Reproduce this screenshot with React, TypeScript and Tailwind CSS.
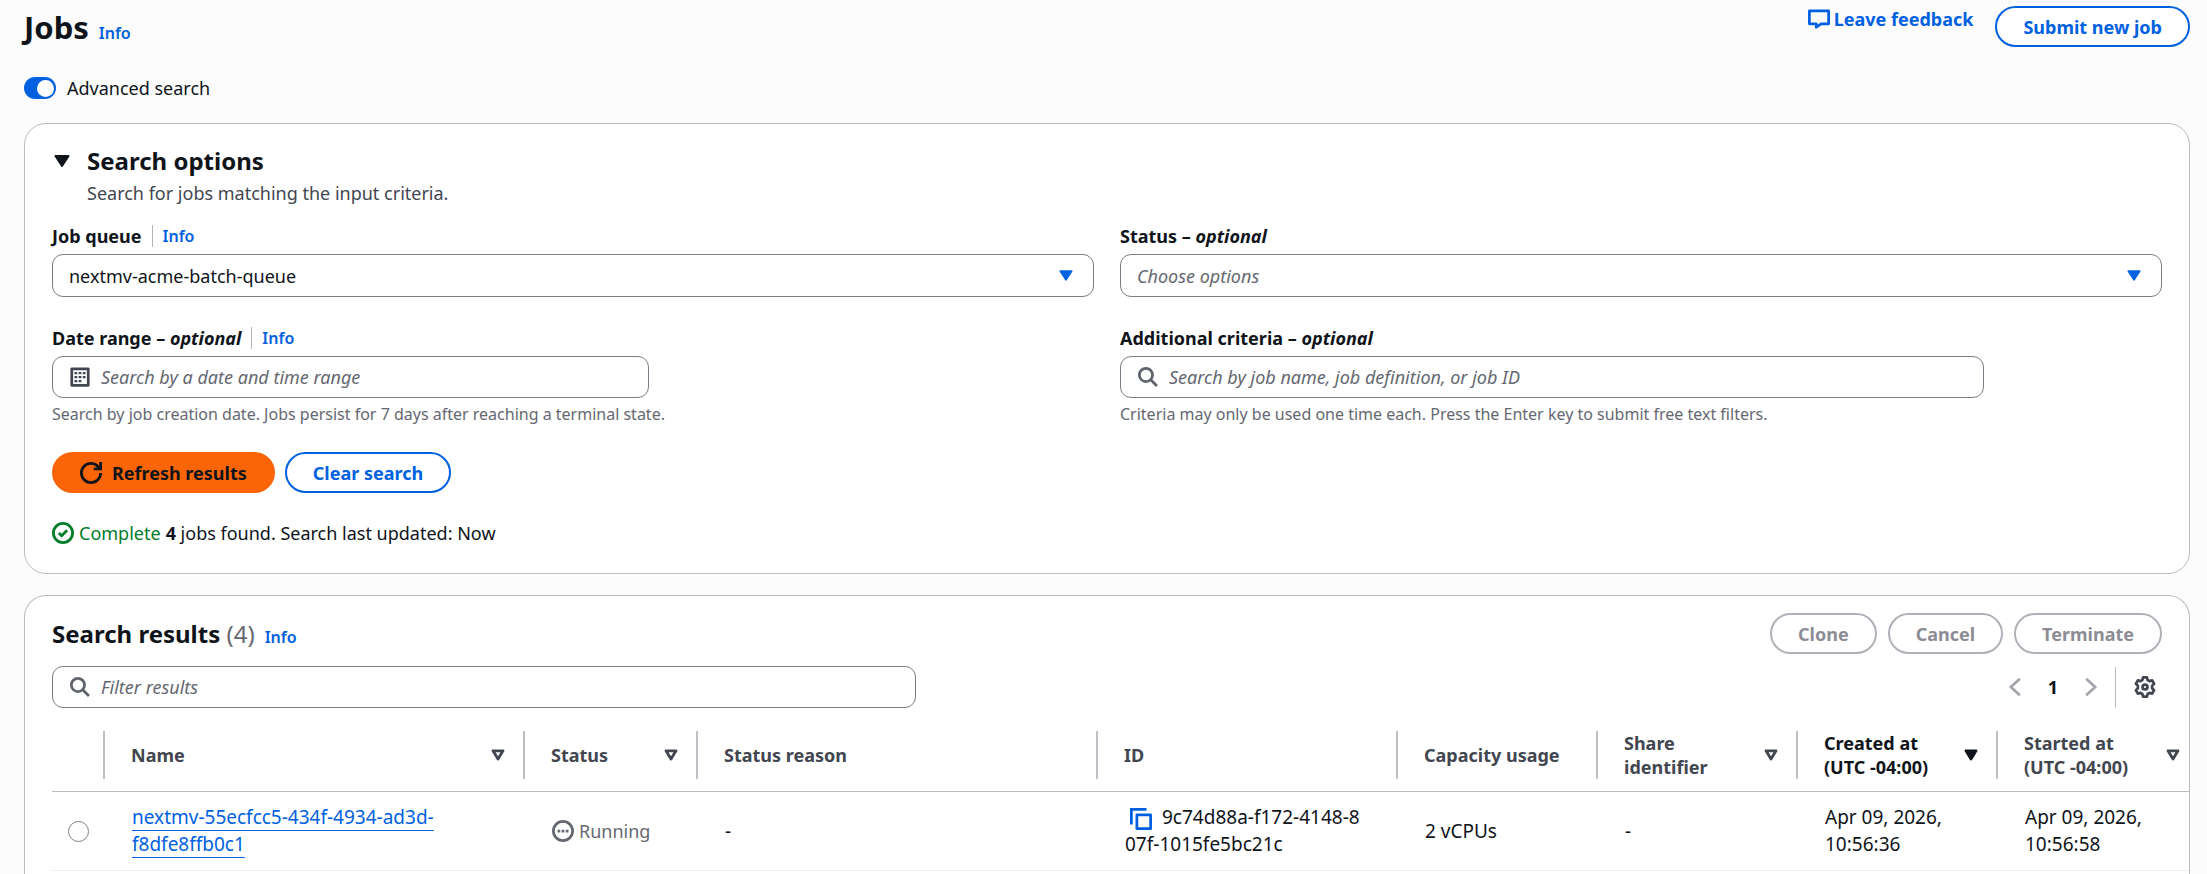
import { useState } from 'react';
import type { ReactNode } from 'react';
import clsx from 'clsx';

type Job = {
  name: string;
  status: string;
  statusReason: string;
  id: string;
  capacity: string;
  share: string;
  createdAt: string;
  startedAt: string;
};

type Column = {
  label: string;
  width: string;
  sort?: 'none' | 'desc';
};

const columns: Column[] = [
  { label: 'Name', width: 'w-[420px]', sort: 'none' },
  { label: 'Status', width: 'w-[173px]', sort: 'none' },
  { label: 'Status reason', width: 'w-[400px]' },
  { label: 'ID', width: 'w-[300px]' },
  { label: 'Capacity usage', width: 'w-[200px]' },
  { label: 'Share identifier', width: 'w-[200px]', sort: 'none' },
  { label: 'Created at (UTC -04:00)', width: 'w-[200px]', sort: 'desc' },
  { label: 'Started at (UTC -04:00)', width: 'w-[200px]', sort: 'none' },
];

const jobs: Job[] = [
  {
    name: 'nextmv-55ecfcc5-434f-4934-ad3d-f8dfe8ffb0c1',
    status: 'Running',
    statusReason: '-',
    id: '9c74d88a-f172-4148-807f-1015fe5bc21c',
    capacity: '2 vCPUs',
    share: '-',
    createdAt: 'Apr 09, 2026, 10:56:36',
    startedAt: 'Apr 09, 2026, 10:56:58',
  },
];

function SearchIcon() {
  return (
    <svg className="h-[22px] w-[22px] shrink-0" viewBox="0 0 16 16" fill="none" stroke="currentColor" strokeWidth="2">
      <circle cx="6.5" cy="6.5" r="4.800" />
      <path d="m10 10 4.500 4.500" />
    </svg>
  );
}

function CalendarIcon() {
  return (
    <svg className="h-[22px] w-[22px] shrink-0 text-[#424650]" viewBox="0 0 16 16">
      <path d="M2 2h12v12H2z" fill="none" stroke="currentColor" strokeWidth="2" strokeLinejoin="round" />
      <path
        d="M4 4.300h2v1.700H4zM7 4.300h2v1.700H7zM10 4.300h2v1.700h-2zM4 7.200h2v1.700H4zM7 7.200h2v1.700H7zM10 7.200h2v1.700h-2zM4 10.100h2v1.700H4zM7 10.100h2v1.700H7z"
        fill="currentColor"
      />
    </svg>
  );
}

function RefreshIcon() {
  return (
    <svg className="h-[22px] w-[22px] shrink-0" viewBox="0 0 16 16" fill="none" stroke="currentColor" strokeWidth="2">
      <path d="M15 8c0 3.900-3.100 7-7 7s-7-3.100-7-7 3.100-7 7-7c2.800 0 5 1.600 6.300 4" />
      <path d="M10 5h5V0" />
    </svg>
  );
}

function CaretIcon({ className }: { className?: string }) {
  return (
    <svg className={className} viewBox="0 0 16 12">
      <path d="M1.500 1h13L8 11z" fill="currentColor" stroke="currentColor" strokeWidth="2" strokeLinejoin="round" />
    </svg>
  );
}

function SortIcon({ filled }: { filled: boolean }) {
  return (
    <svg className="h-3 w-[14px] shrink-0" viewBox="0 0 14 12">
      <path
        d="M2 1.800h10L7 10z"
        fill={filled ? 'currentColor' : 'none'}
        stroke="currentColor"
        strokeWidth="2.800"
        strokeLinejoin="round"
      />
    </svg>
  );
}

function InfoLink() {
  return (
    <a href="#info" className="text-base leading-6 font-semibold text-[#0061e0]">
      Info
    </a>
  );
}

function Optional() {
  return (
    <>
      {' '}
      – <i>optional</i>
    </>
  );
}

function Field({
  id,
  label,
  info,
  hint,
  children,
}: {
  id: string;
  label: ReactNode;
  info?: boolean;
  hint?: string;
  children: ReactNode;
}) {
  return (
    <div>
      <div className="mb-1 flex h-7 items-center">
        <label htmlFor={id} className="font-bold">
          {label}
        </label>
        {info && (
          <span className="ml-[10px] flex h-[22px] items-center border-l border-[#b4b4bb] pl-[10px]">
            <InfoLink />
          </span>
        )}
      </div>
      {children}
      {hint && <p className="mt-1 text-base leading-6 text-[#656871]">{hint}</p>}
    </div>
  );
}

function SelectBox({ id, value }: { id: string; value?: string }) {
  return (
    <div className="relative">
      <select
        id={id}
        className={clsx(
          'h-[43px] w-full appearance-none rounded-[11px] border border-[#7d7d87] bg-white px-4',
          !value && 'text-[#656871] italic'
        )}
      >
        <option>{value ?? 'Choose options'}</option>
      </select>
      <CaretIcon className="pointer-events-none absolute top-4 right-[21px] h-[11px] w-[14px] text-[#0061e0]" />
    </div>
  );
}

function TextBox({
  id,
  placeholder,
  icon,
  className,
}: {
  id: string;
  placeholder: string;
  icon: ReactNode;
  className: string;
}) {
  return (
    <div
      className={clsx(
        'flex h-[42px] items-center gap-[10px] rounded-[11px] border border-[#7d7d87] bg-white px-4 text-[#5f636c]',
        className
      )}
    >
      {icon}
      <input
        id={id}
        type="text"
        aria-label={placeholder}
        placeholder={placeholder}
        className="min-w-0 flex-1 outline-none placeholder:text-[#656871] placeholder:italic"
      />
    </div>
  );
}

function Button({
  children,
  variant = 'normal',
}: {
  children: ReactNode;
  variant?: 'normal' | 'primary' | 'disabled';
}) {
  return (
    <button
      type="button"
      disabled={variant === 'disabled'}
      className={clsx(
        'flex h-[41px] items-center gap-[10px] rounded-full border-2 px-[26px] leading-6 font-bold whitespace-nowrap',
        variant === 'normal' && 'border-[#0061e0] bg-white text-[#0061e0]',
        variant === 'primary' && 'border-[#fb6507] bg-[#fb6507] text-[#0f141a]',
        variant === 'disabled' && 'border-[#b0b0b8] bg-white text-[#8c8c94]'
      )}
    >
      {children}
    </button>
  );
}

function PageHeader() {
  return (
    <header className="flex items-start justify-between pt-[6px]">
      <div className="flex items-baseline gap-[10px]">
        <h1 className="text-[31px] leading-[42px] font-bold">Jobs</h1>
        <InfoLink />
      </div>
      <div className="flex items-start gap-[22px]">
        <a href="#feedback" className="flex h-[26px] items-center gap-1 font-bold text-[#0061e0]">
          <svg className="h-[22px] w-[22px]" viewBox="0 0 16 16" fill="none" stroke="currentColor" strokeWidth="2">
            <path d="M1 2h14v9.500H9.500L6 14v-2.500H1z" strokeLinejoin="round" />
          </svg>
          Leave feedback
        </a>
        <Button>Submit new job</Button>
      </div>
    </header>
  );
}

function SearchOptions() {
  return (
    <section className="rounded-[22px] border border-[#b9bcc2] bg-white px-[27px] pt-[21px] pb-[26px]">
      <div className="flex gap-[17px]">
        <button type="button" aria-label="Collapse search options" className="flex h-8 items-center pl-[2px]">
          <CaretIcon className="h-3 w-4" />
        </button>
        <div>
          <h2 className="text-2xl leading-8 font-bold">Search options</h2>
          <p className="leading-8 text-[#424650]">Search for jobs matching the input criteria.</p>
        </div>
      </div>

      <div className="mt-[13px] grid grid-cols-2 gap-x-[26px] gap-y-[27px]">
        <Field id="job-queue" label="Job queue" info>
          <SelectBox id="job-queue" value="nextmv-acme-batch-queue" />
        </Field>
        <Field id="status" label={<>Status<Optional /></>}>
          <SelectBox id="status" />
        </Field>
        <Field
          id="date-range"
          label={<>Date range<Optional /></>}
          info
          hint="Search by job creation date. Jobs persist for 7 days after reaching a terminal state."
        >
          <TextBox
            id="date-range"
            placeholder="Search by a date and time range"
            icon={<CalendarIcon />}
            className="max-w-[597px]"
          />
        </Field>
        <Field
          id="criteria"
          label={<>Additional criteria<Optional /></>}
          hint="Criteria may only be used one time each. Press the Enter key to submit free text filters."
        >
          <TextBox
            id="criteria"
            placeholder="Search by job name, job definition, or job ID"
            icon={<SearchIcon />}
            className="max-w-[864px]"
          />
        </Field>
      </div>

      <div className="mt-[26px] flex gap-[10px]">
        <Button variant="primary">
          <RefreshIcon />
          Refresh results
        </Button>
        <Button>Clear search</Button>
      </div>

      <p className="mt-[26px] flex items-center gap-[5px] leading-7">
        <span className="flex items-center gap-[5px] text-[#007d2b]">
          <svg className="h-[22px] w-[22px]" viewBox="0 0 16 16" fill="none" stroke="currentColor" strokeWidth="2">
            <circle cx="8" cy="8" r="7" />
            <path d="m5 8 2 2 4-4" />
          </svg>
          Complete
        </span>
        <span>
          <b>4</b> jobs found. Search last updated: Now
        </span>
      </p>
    </section>
  );
}

function ResultsTable() {
  const cell = 'px-[27px]';
  return (
    <table className="w-[2146px] table-fixed text-left">
      <colgroup>
        <col className="w-[53px]" />
        {columns.map(c => (
          <col key={c.label} className={c.width} />
        ))}
      </colgroup>
      <thead>
        <tr className="border-b border-[#b9bcc2]">
          <th className="py-3">
            <div className="h-12 border-r-2 border-[#bfbfc6]" />
          </th>
          {columns.map((c, i) => (
            <th key={c.label} scope="col" className="py-3 font-bold">
              <div
                className={clsx(
                  'flex h-12 items-center justify-between pr-[18px] pl-[26px] leading-6',
                  i < columns.length - 1 && 'border-r-2 border-[#bfbfc6]',
                  c.sort === 'desc' ? 'text-[#0f141a]' : 'text-[#424650]'
                )}
              >
                <span className={clsx(c.sort && i > 4 && 'w-[120px]')}>{c.label}</span>
                {c.sort && <SortIcon filled={c.sort === 'desc'} />}
              </div>
            </th>
          ))}
        </tr>
      </thead>
      <tbody>
        {jobs.map(job => (
          <tr key={job.id} className="h-[79px] border-b border-[#ebebf0] text-[19px] leading-[27px]">
            <td>
              <input
                type="radio"
                name="job"
                aria-label={job.name}
                className="mx-auto block h-[21px] w-[21px] appearance-none rounded-full border border-[#7d7d87] bg-white checked:border-[6px] checked:border-[#0061e0]"
              />
            </td>
            <td className={cell}>
              <a
                href="#job"
                className="block w-[340px] text-[#0061e0] underline decoration-1 underline-offset-[6px]"
              >
                {job.name}
              </a>
            </td>
            <td className={cell}>
              <span className="flex items-center gap-[5px] text-lg text-[#656871]">
                <svg className="h-[22px] w-[22px]" viewBox="0 0 16 16" fill="none" stroke="currentColor">
                  <circle cx="8" cy="8" r="7" strokeWidth="2" />
                  <path d="M4 8h2M7 8h2M10 8h2" strokeWidth="2" />
                </svg>
                {job.status}
              </span>
            </td>
            <td className={cell}>{job.statusReason}</td>
            <td className="pr-8 pl-[27px] break-all">
              <button type="button" aria-label="Copy job ID" className="mr-[10px] ml-[5px] align-text-bottom text-[#0061e0]">
                <svg className="h-[22px] w-[22px]" viewBox="0 0 16 16" fill="none" stroke="currentColor" strokeWidth="2">
                  <path d="M5 5h10v10H5z" strokeLinejoin="round" />
                  <path d="M1 12V1h11" />
                </svg>
              </button>
              {job.id}
            </td>
            <td className={cell}>{job.capacity}</td>
            <td className={cell}>{job.share}</td>
            <td className={cell}>{job.createdAt}</td>
            <td className={cell}>{job.startedAt}</td>
          </tr>
        ))}
      </tbody>
    </table>
  );
}

function SearchResults() {
  return (
    <section className="mt-[21px] flex-1 overflow-hidden rounded-t-[22px] border border-b-0 border-[#b9bcc2] bg-white pt-[17px] pl-[27px]">
      <div className="flex items-center justify-between pr-[27px]">
        <div className="flex items-baseline gap-[10px]">
          <h2 className="text-2xl leading-8 font-bold">
            Search results <span className="font-normal text-[#656871]">(4)</span>
          </h2>
          <InfoLink />
        </div>
        <div className="flex gap-[11px]">
          <Button variant="disabled">Clone</Button>
          <Button variant="disabled">Cancel</Button>
          <Button variant="disabled">Terminate</Button>
        </div>
      </div>

      <div className="mt-3 flex items-center justify-between pr-[27px]">
        <TextBox id="filter" placeholder="Filter results" icon={<SearchIcon />} className="w-[864px]" />
        <div className="flex h-[42px] items-center">
          <button type="button" disabled aria-label="Previous page" className="text-[#a4a4ad]">
            <svg className="h-[22px] w-[22px]" viewBox="0 0 16 16" fill="none" stroke="currentColor" strokeWidth="2">
              <path d="M11.500 2 5 8l6.500 6" />
            </svg>
          </button>
          <button type="button" className="w-[54px] font-bold">
            1
          </button>
          <button type="button" disabled aria-label="Next page" className="text-[#a4a4ad]">
            <svg className="h-[22px] w-[22px]" viewBox="0 0 16 16" fill="none" stroke="currentColor" strokeWidth="2">
              <path d="m4.500 2 6.500 6-6.500 6" />
            </svg>
          </button>
          <div className="ml-[13px] flex h-[41px] items-center border-l border-[#b9bcc2] pr-[6px] pl-[18px]">
            <button type="button" aria-label="Preferences" className="text-[#424650]">
              <svg
                className="h-[22px] w-[22px]"
                viewBox="0 0 16 16"
                fill="none"
                stroke="currentColor"
                strokeWidth="2"
                strokeLinejoin="round"
              >
                <path d="M6.600 1h2.800l.5 1.900 1.400.8 1.900-.5 1.400 2.400L13.200 7v2l1.400 1.400-1.400 2.400-1.900-.5-1.400.8-.5 1.900H6.600l-.5-1.900-1.400-.8-1.900.5-1.400-2.400L2.800 9V7L1.400 5.600l1.400-2.400 1.900.5 1.400-.8z" />
                <circle cx="8" cy="8" r="1.800" />
              </svg>
            </button>
          </div>
        </div>
      </div>

      <div className="mt-[11px] overflow-hidden">
        <ResultsTable />
      </div>
    </section>
  );
}

export default function App() {
  const [advanced, setAdvanced] = useState(true);

  return (
    <main className="flex h-screen flex-col overflow-hidden bg-[#fcfcfc] pr-[17px] pl-6 font-['Noto_Sans',sans-serif] text-lg leading-7 text-[#0f141a]">
      <PageHeader />
      <label className="mt-[29px] mb-6 flex h-[22px] items-center gap-[11px]">
        <input
          type="checkbox"
          role="switch"
          checked={advanced}
          onChange={e => setAdvanced(e.target.checked)}
          className="flex h-[22px] w-8 appearance-none items-center rounded-full bg-[#8c8c94] px-[2px] before:h-[17px] before:w-[17px] before:rounded-full before:bg-white checked:justify-end checked:bg-[#0061e0]"
        />
        Advanced search
      </label>
      {advanced && <SearchOptions />}
      <SearchResults />
    </main>
  );
}
